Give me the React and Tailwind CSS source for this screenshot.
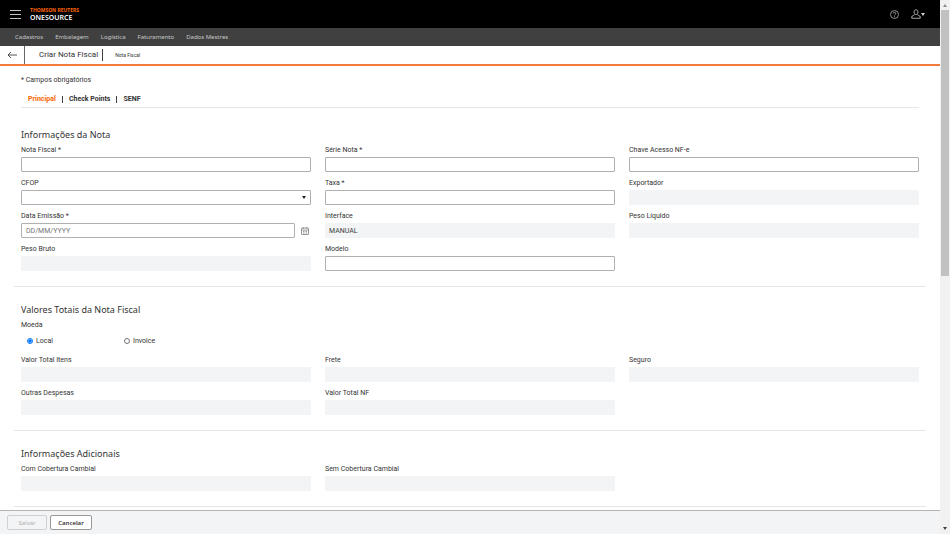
import React from 'react';
import { useState } from "react";

const menuItems = ['Cadastros', 'Embalagem', 'Logística', 'Faturamento', 'Dados Mestres'];
const tabs = ['Principal', 'Check Points', 'SENF'];

const boxStyle = "block w-full h-[15px] px-1 text-[7px] leading-[10px] text-[#404040] outline-none";
const editable = "border border-[#b0b0b0] rounded-[1px] bg-white";
const disabledBox = "bg-[#f3f4f6]";

const Label = ({ id, children }) => (
    <label htmlFor={id} className="block text-[7px] leading-[10px] mb-0.5">{children}</label>
)

const Field = ({ id, label, value, disabled }) => {
    return (
        <div>
            <Label id={id}>{label}</Label>
            <input
                id={id}
                type="text"
                defaultValue={value}
                disabled={disabled}
                className={`${boxStyle} ${disabled ? disabledBox : editable}`}
            />
        </div>
    )
}

const SelectField = ({ id, label }) => {
    return (
        <div>
            <Label id={id}>{label}</Label>
            <div className="relative">
                <select id={id} className={`${boxStyle} ${editable} appearance-none`}>
                    <option value=""></option>
                </select>
                <svg viewBox="0 0 4 3" className="absolute right-[5px] top-1.5 w-1 h-[3px] pointer-events-none">
                    <path d="M0 0h4L2 3z" fill="#222" />
                </svg>
            </div>
        </div>
    )
}

const DateField = ({ id, label }) => {
    return (
        <div>
            <Label id={id}>{label}</Label>
            <div className="flex items-center">
                <input
                    id={id}
                    type="text"
                    placeholder="DD/MM/YYYY"
                    className={`${boxStyle} ${editable} flex-1 min-w-0 placeholder:text-[#767676]`}
                />
                <button aria-label="Abrir calendário" className="ml-1.5 mr-0.5">
                    <svg viewBox="0 0 16 16" className="w-2 h-2" fill="none" stroke="#777" strokeWidth="1.5">
                        <rect x="1" y="2" width="14" height="13" rx="1" />
                        <path d="M1 6h14M4.5 0v3M11.500 0v3M4 9h2M7 9h2M10 9h2M4 12h2M7 12h2M10 12h2" />
                    </svg>
                </button>
            </div>
        </div>
    )
}

const Section = ({ title, children }) => (
    <section className="px-[7px] pb-[15px] mb-4 border-b border-[#e6e6e6]">
        <h2 className="text-[9px] leading-[14px] mb-[3px] font-['Noto_Sans',sans-serif]">{title}</h2>
        {children}
    </section>
)

const Grid = ({ children }) => (
    <div className="grid grid-cols-3 gap-x-3.5 gap-y-1.5">{children}</div>
)

const Header = () => {
    return (
        <header className="shrink-0">
            <div className="h-7 bg-black flex items-center px-2.5">
                <button aria-label="Menu">
                    <svg viewBox="0 0 11 11" className="w-[11px] h-[11px]" stroke="#c4c4c4" strokeWidth="1">
                        <path d="M0 1.500h11M0 5.500h11M0 9.500h11" />
                    </svg>
                </button>
                <div className="ml-[9px] font-['Noto_Sans',sans-serif]">
                    <div className="text-[5px] leading-[7px] font-bold text-[#ff6200]">THOMSON REUTERS</div>
                    <div className="text-[7px] leading-[8px] font-semibold text-white">ONESOURCE</div>
                </div>
                <button aria-label="Ajuda" className="ml-auto">
                    <svg viewBox="0 0 18 18" className="w-[9px] h-[9px]" fill="none" stroke="#b8b8b8" strokeWidth="1.5">
                        <circle cx="9" cy="9" r="8" />
                        <path d="M6.500 7a2.500 2.500 0 1 1 3.500 2.300c-.7.4-1 .8-1 1.700M9 12.500v2" />
                    </svg>
                </button>
                <button aria-label="Usuário" className="ml-3 mr-[5px] flex items-center">
                    <svg viewBox="0 0 20 20" className="w-2.5 h-2.5" fill="none" stroke="#b8b8b8" strokeWidth="1.800">
                        <path d="M10 1.500c-2.500 0-4 1.800-4 4.500 0 3 1.800 5 4 5s4-2 4-5c0-2.700-1.500-4.500-4-4.500zM7.500 11c0 2-6 1.500-6 5v2.500h17V16c0-3.500-6-3-6-5" />
                    </svg>
                    <svg viewBox="0 0 4 3" className="w-1 h-[3px]">
                        <path d="M0 0h4L2 3z" fill="#d0d0d0" />
                    </svg>
                </button>
            </div>
            <nav className="h-[18px] bg-[#404040] flex items-center gap-3 px-[15px] text-[6px] leading-[10px] text-[#c8c8c8] font-['Noto_Sans',sans-serif]">
                {menuItems.map((item) => (
                    <a key={item} href="#">{item}</a>
                ))}
            </nav>
            <div className="h-5 flex items-center border-b-2 border-[#f47b3e]">
                <button aria-label="Voltar" className="self-stretch w-[25px] pl-[7px] border-r border-[#666]">
                    <svg viewBox="0 0 10 8" className="w-2.5 h-2" fill="none" stroke="#404040" strokeWidth="0.900">
                        <path d="M10 4H1M4 1L1 4l3 3" />
                    </svg>
                </button>
                <h1 className="ml-3.5 pr-1 text-[8px] leading-[12px] border-r border-[#404040]">Criar Nota Fiscal</h1>
                <span className="ml-3 text-[5px] leading-[10px]">Nota Fiscal</span>
            </div>
        </header>
    )
}

const Scrollbar = () => (
    <div aria-hidden="true" className="w-2.5 shrink-0 bg-[#f1f1f1] flex flex-col items-center">
        <div className="h-2.5 flex items-center">
            <svg viewBox="0 0 4 3" className="w-1 h-[3px]"><path d="M0 3h4L2 0z" fill="#8a8a8a" /></svg>
        </div>
        <div className="w-2 grow">
            <div className="h-[52%] bg-[#c1c1c1]"></div>
        </div>
        <div className="h-3 flex items-center">
            <svg viewBox="0 0 4 3" className="w-1 h-[3px]"><path d="M0 0h4L2 3z" fill="#404040" /></svg>
        </div>
    </div>
)

const App = () => {

    const [activeTab, setActiveTab] = useState('Principal');
    const [currency, setCurrency] = useState('local');

    return (
        <div className="h-screen flex bg-white text-[#333] font-[Roboto,sans-serif]">
            <div className="flex-1 min-w-0 flex flex-col">
                <Header />

                <main className="flex-1 min-h-0 overflow-hidden px-3.5 pt-[9px]">
                    <div className="px-[7px]">
                        <p className="text-[7px] leading-[10px]">* Campos obrigatórios</p>
                        <div className="mt-1.5 mb-5 h-[17px] flex items-center pl-[7px] border-b border-[#e6e6e6] text-[7px] leading-[10px] font-bold">
                            {tabs.map((tab, i) => (
                                <React.Fragment key={tab}>
                                    {i > 0 && <span className="mx-1.5 w-px h-[7px] bg-[#404040]"></span>}
                                    <button
                                        onClick={() => setActiveTab(tab)}
                                        className={tab === activeTab ? "text-[#fa6400]" : "text-[#333]"}
                                    >
                                        {tab}
                                    </button>
                                </React.Fragment>
                            ))}
                        </div>
                    </div>

                    <Section title="Informações da Nota">
                        <Grid>
                            <Field id="notaFiscal" label="Nota Fiscal *" />
                            <Field id="serieNota" label="Série Nota *" />
                            <Field id="chaveAcesso" label="Chave Acesso NF-e" />
                            <SelectField id="cfop" label="CFOP" />
                            <Field id="taxa" label="Taxa *" />
                            <Field id="exportador" label="Exportador" disabled />
                            <DateField id="dataEmissao" label="Data Emissão *" />
                            <Field id="interface" label="Interface" value="MANUAL" disabled />
                            <Field id="pesoLiquido" label="Peso Líquido" disabled />
                            <Field id="pesoBruto" label="Peso Bruto" disabled />
                            <Field id="modelo" label="Modelo" />
                        </Grid>
                    </Section>

                    <Section title="Valores Totais da Nota Fiscal">
                        <fieldset className="mb-[9px] text-[7px] leading-[10px]">
                            <legend>Moeda</legend>
                            <div className="flex pl-1.5 pt-1.5">
                                <label className="w-[97px] flex items-center gap-[3px]">
                                    <input type="radio" name="moeda" className="w-1.5 h-1.5 m-0" checked={currency === 'local'} onChange={() => setCurrency('local')} />
                                    Local
                                </label>
                                <label className="flex items-center gap-[3px]">
                                    <input type="radio" name="moeda" className="w-1.5 h-1.5 m-0" checked={currency === 'invoice'} onChange={() => setCurrency('invoice')} />
                                    Invoice
                                </label>
                            </div>
                        </fieldset>
                        <Grid>
                            <Field id="valorTotalItens" label="Valor Total Itens" disabled />
                            <Field id="frete" label="Frete" disabled />
                            <Field id="seguro" label="Seguro" disabled />
                            <Field id="outrasDespesas" label="Outras Despesas" disabled />
                            <Field id="valorTotalNf" label="Valor Total NF" disabled />
                        </Grid>
                    </Section>

                    <Section title="Informações Adicionais">
                        <Grid>
                            <Field id="comCobertura" label="Com Cobertura Cambial" disabled />
                            <Field id="semCobertura" label="Sem Cobertura Cambial" disabled />
                        </Grid>
                    </Section>
                </main>

                <footer className="h-6 shrink-0 flex items-center gap-[3px] px-[7px] bg-[#f3f4f6] border-t border-[#b4b4b4] text-[6px] leading-[10px] font-['Noto_Sans',sans-serif]">
                    <button disabled className="h-[15px] w-10 border border-[#d0d0d0] rounded-[2px] text-[#afafaf]">Salvar</button>
                    <button className="h-[15px] w-[42px] border border-[#999] rounded-[2px] bg-white font-semibold">Cancelar</button>
                </footer>
            </div>
            <Scrollbar />
        </div>
    )
}

export default App
